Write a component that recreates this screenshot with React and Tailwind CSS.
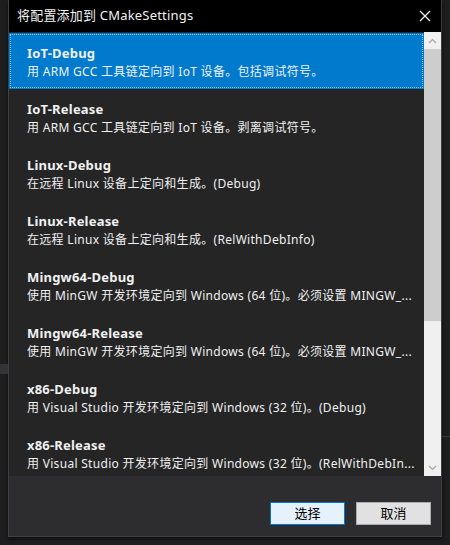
import React from 'react';

const CONFIGS = [
  { name: 'IoT-Debug', desc: '用 ARM GCC 工具链定向到 IoT 设备。包括调试符号。' },
  { name: 'IoT-Release', desc: '用 ARM GCC 工具链定向到 IoT 设备。剥离调试符号。' },
  { name: 'Linux-Debug', desc: '在远程 Linux 设备上定向和生成。(Debug)' },
  { name: 'Linux-Release', desc: '在远程 Linux 设备上定向和生成。(RelWithDebInfo)' },
  { name: 'Mingw64-Debug', desc: '使用 MinGW 开发环境定向到 Windows (64 位)。必须设置 MINGW_...' },
  { name: 'Mingw64-Release', desc: '使用 MinGW 开发环境定向到 Windows (64 位)。必须设置 MINGW_...' },
  { name: 'x86-Debug', desc: '用 Visual Studio 开发环境定向到 Windows (32 位)。(Debug)' },
  { name: 'x86-Release', desc: '用 Visual Studio 开发环境定向到 Windows (32 位)。(RelWithDebIn...' },
];

const font = { fontFamily: '"Segoe UI", "Noto Sans", "Noto Sans CJK SC", sans-serif' };

function Chevron({ up }) {
  return (
    <svg width="9" height="6" viewBox="0 0 9 6" className="block">
      <path d={up ? 'M1 5 L4.5 1.5 L8 5' : 'M1 1 L4.5 4.5 L8 1'} fill="none" stroke="#a5a5a9" strokeWidth="1.2" />
    </svg>
  );
}

function ConfigRow({ item, selected }) {
  const box = selected
    ? 'bg-[#007acc] outline outline-1 outline-dotted outline-[#8cc6f0] -outline-offset-2'
    : '';
  return (
    <div className={`h-[56px] shrink-0 pl-[18px] pr-[8px] pt-[11px] text-[#f1f1f1] ${box}`}>
      <div className="text-[13px] leading-[19px] font-bold tracking-[0.2px] whitespace-nowrap">{item.name}</div>
      <div className="text-[12px] leading-[18px] tracking-[0.3px] whitespace-nowrap overflow-hidden">{item.desc}</div>
    </div>
  );
}

export default function App() {
  return (
    <div className="w-[450px] h-[545px] bg-[#1e1e1e] relative overflow-hidden" style={font}>
      {/* faint editor chrome behind the dialog */}
      <div className="absolute left-0 top-[364px] w-[8px] h-[10px] bg-[#333337]" />
      <div className="absolute right-0 top-[436px] w-[8px] h-px bg-[#3a3a3d]" />

      <div className="ml-[8px] w-[434px] h-[537px] flex flex-col bg-[#2d2d30] border-x border-b border-[#3f3f46] shadow-[0_2px_4px_rgba(0,0,0,0.6)]">
        <div className="h-[32px] shrink-0 bg-black flex items-center justify-between pl-[8px] pr-[10px]">
          <span className="text-[13px] tracking-[0.2px] text-[#f1f1f1]">将配置添加到 CMakeSettings</span>
          <svg width="12" height="12" viewBox="0 0 12 12">
            <path d="M1 1 L11 11 M11 1 L1 11" stroke="#f1f1f1" strokeWidth="1.3" />
          </svg>
        </div>

        <div className="h-[444px] shrink-0 flex">
          <div className="flex-1 bg-[#252526] pt-px overflow-hidden flex flex-col">
            {CONFIGS.map((c, i) => (
              <ConfigRow key={c.name} item={c} selected={i === 0} />
            ))}
          </div>
          <div className="w-[17px] bg-[#f0f0f0] flex flex-col">
            <div className="h-[17px] flex items-center justify-center"><Chevron up /></div>
            <div className="h-[272px] bg-[#cdcdcd]" />
            <div className="flex-1" />
            <div className="h-[17px] flex items-center justify-center"><Chevron /></div>
          </div>
        </div>

        <div className="flex-1 flex justify-end items-start gap-[11px] pt-[26px] pr-[10px]">
          <button className="w-[75px] h-[23px] bg-[#e5f1fb] border border-[#0078d7] text-[13px] text-black">选择</button>
          <button className="w-[75px] h-[23px] bg-[#e1e1e1] border border-[#adadad] text-[13px] text-black">取消</button>
        </div>
      </div>
    </div>
  );
}
